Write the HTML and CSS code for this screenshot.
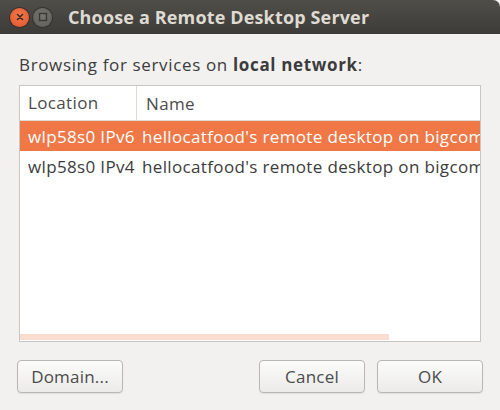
FILE: index.html
```html
<!DOCTYPE html>
<html lang="en">
<head>
<meta charset="UTF-8" />
<title>Choose a Remote Desktop Server</title>
<link rel="stylesheet" href="styles.css">
</head>
<body>

<div class="window">
  <div class="titlebar">
    <span class="wbtn close">
      <svg width="10" height="10" viewBox="0 0 10 10"><path d="M2.5 2.5 L7.5 7.5 M7.5 2.5 L2.5 7.5" stroke="#3a2a22" stroke-width="1.6" stroke-linecap="round"/></svg>
    </span>
    <span class="wbtn restore">
      <svg width="10" height="10" viewBox="0 0 10 10"><rect x="1.5" y="1.5" width="7" height="7" fill="none" stroke="#3a3935" stroke-width="1.4"/></svg>
    </span>
    <span class="title">Choose a Remote Desktop Server</span>
  </div>

  <div class="content">
    <p class="intro">Browsing for services on <b>local network</b>:</p>

    <div class="list">
      <div class="list-head">
        <div class="col col-loc">Location</div>
        <div class="col col-name">Name</div>
      </div>
      <div class="row selected">
        <div class="col col-loc">wlp58s0 IPv6</div>
        <div class="col col-name">hellocatfood's remote desktop on bigcomputer</div>
      </div>
      <div class="row">
        <div class="col col-loc">wlp58s0 IPv4</div>
        <div class="col col-name">hellocatfood's remote desktop on bigcomputer</div>
      </div>
      <div class="hscroll"></div>
    </div>

    <div class="actions">
      <button class="btn">Domain...</button>
      <span class="spacer"></span>
      <button class="btn">Cancel</button>
      <button class="btn">OK</button>
    </div>
  </div>
</div>

</body>
</html>
```

FILE: styles.css
```css
body {
  margin: 0;
  width: 500px;
  height: 410px;
  overflow: hidden;
  font-family: "Open Sans", "DejaVu Sans", sans-serif;
  background: #f2f1f0;
}
.window {
  width: 500px;
  height: 410px;
  background: #f2f1f0;
  display: flex;
  flex-direction: column;
}
.titlebar {
  height: 34px;
  display: flex;
  align-items: center;
  background: linear-gradient(#4f4e49, #3c3b37);
  border-top-right-radius: 7px;
  padding-left: 10px;
  flex-shrink: 0;
}
.wbtn {
  width: 19px;
  height: 19px;
  border-radius: 50%;
  display: flex;
  align-items: center;
  justify-content: center;
  margin-right: 4px;
}
.close {
  background: radial-gradient(circle at 50% 40%, #f37a4e, #e1512a);
  box-shadow: 0 0 0 1px #3a2d27;
}
.restore {
  background: radial-gradient(circle at 50% 40%, #77766f, #5c5b56);
  box-shadow: 0 0 0 1px #33322e;
}
.title {
  margin-left: 12px;
  color: #dfdbd2;
  font-weight: 700;
  font-size: 18px;
  letter-spacing: 0.15px;
}
.content {
  flex: 1;
  padding: 0 17px;
  display: flex;
  flex-direction: column;
}
.intro {
  margin: 19px 2px 0;
  height: 32px;
  font-size: 17px;
  letter-spacing: 0.65px;
  color: #3c3c3c;
}
.intro b {
  font-weight: 700;
}
.list {
  margin: 0 2px;
  height: 255px;
  background: white;
  border: 1px solid #c8c6c2;
  position: relative;
  overflow: hidden;
  font-size: 17px;
  letter-spacing: 0.35px;
}
.list-head, .row {
  display: flex;
  white-space: nowrap;
}
.list-head {
  height: 34px;
  align-items: center;
  border-bottom: 1px solid #dcdad5;
  color: #4c4c4c;
}
.list-head .col-loc {
  border-right: 1px solid #dcdad5;
  height: 34px;
  line-height: 34px;
}
.list-head .col-name {
  padding-left: 9px;
}
.col {
  flex-shrink: 0;
  box-sizing: border-box;
}
.col-loc {
  width: 117px;
  padding-left: 8px;
}
.col-name {
  padding-left: 5px;
}
.row {
  height: 30px;
  align-items: center;
  color: #3c3c3c;
}
.row.selected {
  background: #f07746;
  color: #ffffff;
}
.hscroll {
  position: absolute;
  left: 0;
  bottom: 1px;
  width: 369px;
  height: 6px;
  background: #fbdcd1;
}
.actions {
  display: flex;
  margin-top: 18px;
  gap: 12px;
}
.spacer {
  flex: 1;
}
.btn {
  width: 106px;
  height: 33px;
  font-family: inherit;
  font-size: 17px;
  letter-spacing: 0.2px;
  color: #4c4c4c;
  background: linear-gradient(#fbfbfa, #ecebe9);
  border: 1px solid #b9b7b2;
  border-radius: 4px;
  box-shadow: 0 1px 1px rgba(0,0,0,0.08);
}
```
